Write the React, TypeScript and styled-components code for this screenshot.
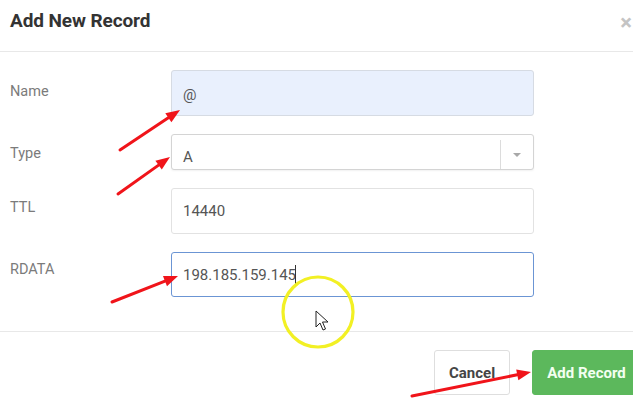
import React from "react";
import styled, { createGlobalStyle } from "styled-components";

const Global = createGlobalStyle`
  html, body { margin: 0; padding: 0; background: #fff; overflow: hidden; }
  body { font-family: Roboto, "Liberation Sans", Arial, sans-serif; }
  #root { width: 633px; height: 406px; overflow: hidden; position: relative; }
`;

const Dialog = styled.div`
  width: 650px;
  background: #fff;
  display: flex;
  flex-direction: column;
`;

const Header = styled.div`
  height: 51px;
  border-bottom: 1px solid #e8e8e8;
  display: flex;
  align-items: center;
  justify-content: space-between;
  padding: 0 18px 0 10px;
  box-sizing: content-box;
`;

const Title = styled.h4`
  margin: 0;
  margin-top: -10px;
  font-size: 19px;
  font-weight: 700;
  color: #333;
  letter-spacing: -0.1px;
`;

const Close = styled.span`
  font-size: 22px;
  font-weight: 700;
  color: #c4c4c4;
  line-height: 1;
  margin-top: -6px;
`;

const Body = styled.div`
  padding: 18px 0 0 10px;
  height: 261px;
  border-bottom: 1px solid #e8e8e8;
  display: flex;
  flex-direction: column;
  gap: 18px;
`;

const Row = styled.div`
  display: grid;
  grid-template-columns: 161px 363px;
  align-items: start;
`;

const Label = styled.label<{ $top: number }>`
  font-size: 14.5px;
  color: #7b7b7b;
  padding-top: ${(p) => p.$top}px;
  line-height: 16px;
`;

const Field = styled.div<{ $h: number; $bg?: string; $border?: string; $pad?: number }>`
  height: ${(p) => p.$h}px;
  box-sizing: border-box;
  border: 1px solid ${(p) => p.$border || "#e2e2e2"};
  border-radius: 3px;
  background: ${(p) => p.$bg || "#fff"};
  display: flex;
  align-items: center;
  padding: ${(p) => p.$pad || 0}px 0 0 11px;
  font-size: 15px;
  color: #555;
  position: relative;
`;

const SelectBox = styled(Field)`
  padding-right: 0;
  border-color: #d4d4d4;
  box-shadow: 0 1px 2px rgba(0, 0, 0, 0.06);
`;

const SelectText = styled.span`
  flex: 1;
`;

const ArrowCell = styled.div`
  width: 32px;
  border-left: 1px solid #dcdcdc;
  display: flex;
  align-items: center;
  justify-content: center;
  margin-top: -5px;
  height: calc(100% + 5px);
`;

const Caret = styled.span`
  width: 0;
  height: 0;
  border-left: 4px solid transparent;
  border-right: 4px solid transparent;
  border-top: 4px solid #a8a8a8;
`;

const TextCursor = styled.span`
  display: inline-block;
  width: 1px;
  height: 20px;
  background: #333;
  margin-left: -1px;
`;

const Footer = styled.div`
  display: flex;
  justify-content: flex-end;
  gap: 22px;
  padding: 18px 9px 0 0;
`;

const Button = styled.button<{ $primary?: boolean }>`
  height: 45px;
  box-sizing: border-box;
  font-family: inherit;
  font-size: 15px;
  font-weight: 700;
  border-radius: 3px;
  padding: 0 14px;
  border: 1px solid ${(p) => (p.$primary ? "#5cb85c" : "#dedede")};
  background: ${(p) => (p.$primary ? "#5cb85c" : "#fff")};
  color: ${(p) => (p.$primary ? "#f2fff0" : "#454545")};
  width: ${(p) => (p.$primary ? "109px" : "76px")};
`;

const Overlay = styled.svg`
  position: absolute;
  left: 0;
  top: 0;
  pointer-events: none;
`;

const arrows: [number, number, number, number][] = [
  [120, 150, 180, 110],
  [118, 194, 170, 157],
  [112, 302, 178, 276],
  [412, 396, 531, 372],
];

function Arrow({ a }: { a: [number, number, number, number] }) {
  const [x1, y1, x2, y2] = a;
  const ang = Math.atan2(y2 - y1, x2 - x1);
  const L = 14;
  const W = 5.5;
  const bx = x2 - L * Math.cos(ang);
  const by = y2 - L * Math.sin(ang);
  const px = -Math.sin(ang) * W;
  const py = Math.cos(ang) * W;
  return (
    <g>
      <line x1={x1} y1={y1} x2={bx} y2={by} stroke="#f0141a" strokeWidth={3} strokeLinecap="round" />
      <polygon points={`${x2},${y2} ${bx + px},${by + py} ${bx - px},${by - py}`} fill="#f0141a" />
    </g>
  );
}

export default function App() {
  return (
    <>
      <Global />
      <Dialog>
        <Header>
          <Title>Add New Record</Title>
          <Close>×</Close>
        </Header>
        <Body>
          <Row>
            <Label $top={14}>Name</Label>
            <Field $h={46} $bg="#e9f0fd" $border="#d6dbe3" $pad={4}>@</Field>
          </Row>
          <Row>
            <Label $top={12}>Type</Label>
            <SelectBox $h={36} $pad={10}>
              <SelectText>A</SelectText>
              <ArrowCell>
                <Caret />
              </ArrowCell>
            </SelectBox>
          </Row>
          <Row>
            <Label $top={12}>TTL</Label>
            <Field $h={46}>14440</Field>
          </Row>
          <Row>
            <Label $top={10}>RDATA</Label>
            <Field $h={45} $border="#6b95d4">
              198.185.159.145
              <TextCursor />
            </Field>
          </Row>
        </Body>
        <Footer>
          <Button>Cancel</Button>
          <Button $primary>Add Record</Button>
        </Footer>
      </Dialog>
      <Overlay width={633} height={406} viewBox="0 0 633 406">
        <circle cx={318} cy={312} r={35} fill="none" stroke="#f2f024" strokeWidth={3.2} />
        <path
          d="M316 311 L316 327 L320 323 L323 330 L325.5 329 L322.5 322 L328 322 Z"
          fill="#fff"
          stroke="#222"
          strokeWidth={1}
          strokeLinejoin="round"
        />
        {arrows.map((a, i) => (
          <Arrow key={i} a={a} />
        ))}
      </Overlay>
    </>
  );
}
